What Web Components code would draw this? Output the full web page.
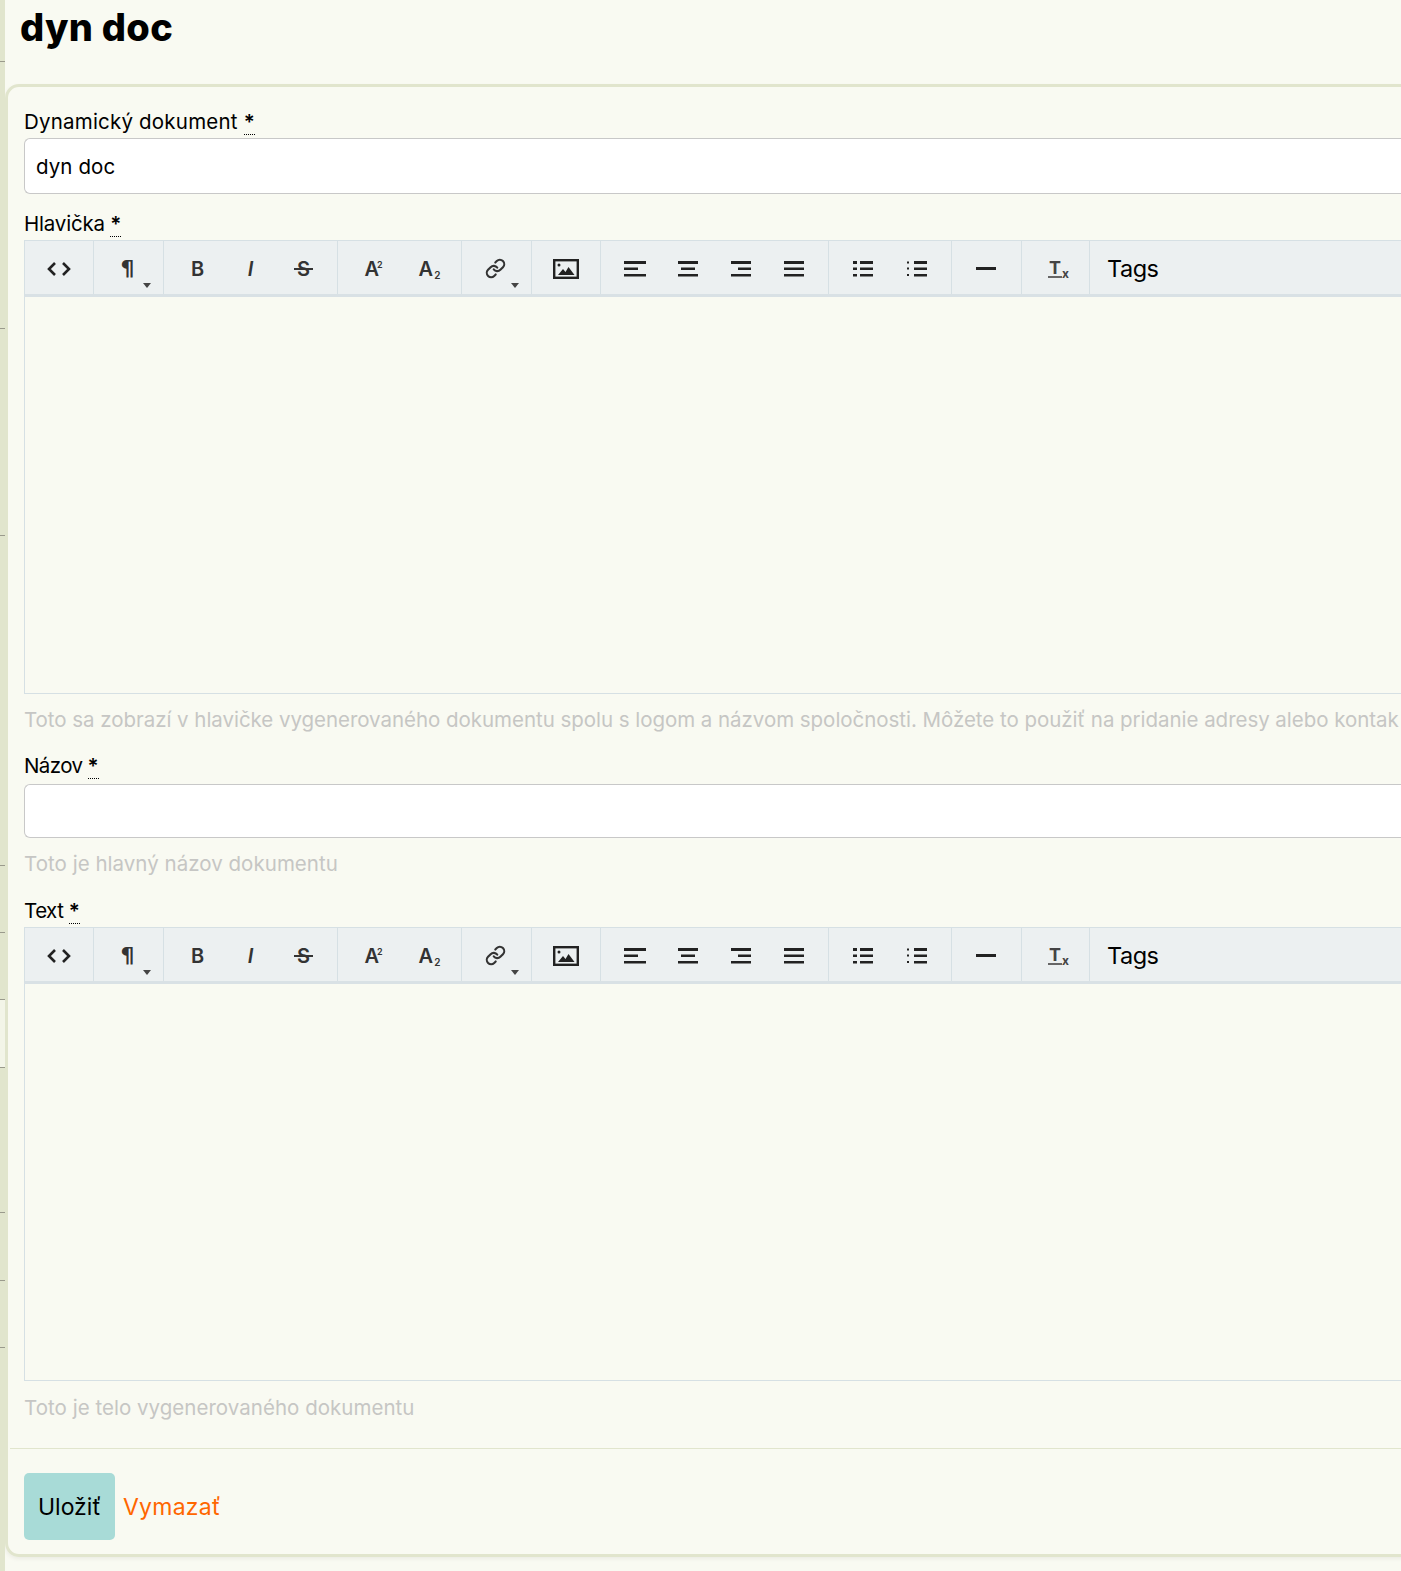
<!DOCTYPE html>
<html lang="sk">
<head>
<meta charset="utf-8">
<title>dyn doc</title>
<style>
    html, body { margin: 0; height: 100%; overflow: hidden; background: #f9faf2; }
    body { font-family: Inter, "Liberation Sans", sans-serif; color: #000; }
</style>
</head>
<body>
<template id="toolbar-tpl">
    <style>
        :host { display: flex; height: 57px; background: #ecf0f1; border-top: 1px solid #d6e0e4; border-bottom: 3px solid #d9e1e5; border-left: 1px solid #d6e0e4; box-sizing: border-box; color: #333; }
        .grp { display: flex; box-sizing: border-box; border-right: 1px solid #d6e0e4; padding-left: 7px; flex: none; }
        .btn { width: 53px; display: flex; align-items: center; justify-content: center; position: relative; font: 600 20px Inter, sans-serif; color: #333; padding-top: 2px; box-sizing: border-box; }
        .btn svg { display: block; }
        .caret::after { content: ""; position: absolute; right: 3px; bottom: 6px; border: 4px solid transparent; border-top: 5px solid #444; border-bottom: 0; }
        .pil { font: 700 22px "DejaVu Sans", sans-serif; }
        .strike { position: relative; padding: 0 1px; font-weight: 600; }
        .strike::after { content: ""; position: absolute; left: -2px; right: -2px; top: 11.5px; height: 1.5px; background: #333; }
        .sup { font-size: 9px; vertical-align: 8px; line-height: 0; margin-left: -2px; }
        .sub { font-size: 10px; vertical-align: -3px; line-height: 0; margin-left: 1px; }
        .clear { font: 700 18px Inter, sans-serif; color: #444; position: relative; top: -1px; left: 3px; }
        .clear b { display: inline-block; font-weight: inherit; border-bottom: 2px solid #666; line-height: 17px; padding: 0 1px; }
        .clear span { font-size: 12px; font-weight: 700; vertical-align: -4px; line-height: 0; }
        .tags { font: 400 23.5px Inter, sans-serif; color: #000; padding: 2px 0 0 17px; display: flex; align-items: center; letter-spacing: -.5px; }
    </style>
    <div class="grp" style="width:69px;padding-left:7px"><div class="btn"><svg width="24" height="16" viewBox="0 0 24 16" fill="none" stroke="#222" stroke-width="2.6"><path d="M8 2 2 8l6 6M16 2l6 6-6 6"/></svg></div></div>
    <div class="grp" style="width:70px"><div class="btn caret"><span class="pil">¶</span></div></div>
    <div class="grp" style="width:174px"><div class="btn">B</div><div class="btn"><i>I</i></div><div class="btn"><span class="strike">S</span></div></div>
    <div class="grp" style="width:124px"><div class="btn"><span style="position:relative;left:2px">A<span class="sup">2</span></span></div><div class="btn"><span style="position:relative;left:5px">A<span class="sub">2</span></span></div></div>
    <div class="grp" style="width:70px"><div class="btn caret"><svg width="21" height="21" viewBox="0 0 24 24" fill="none" stroke="#333" stroke-width="2.400" stroke-linecap="round"><path d="M10 13a5 5 0 0 0 7.540.540l3-3a5 5 0 0 0-7.070-7.070l-1.720 1.710"/><path d="M14 11a5 5 0 0 0-7.540-.540l-3 3a5 5 0 0 0 7.070 7.070l1.710-1.710"/></svg></div></div>
    <div class="grp" style="width:69px"><div class="btn"><svg width="26" height="20" viewBox="0 0 26 20"><rect x="1.200" y="1.200" width="23.600" height="17.600" fill="none" stroke="#222" stroke-width="2.400"/><circle cx="6" cy="6" r="1.500" fill="#222"/><path d="M5 16l5-6 2.500 3 3-5 6 8z" fill="#222"/></svg></div></div>
    <div class="grp" style="width:228px">
        <div class="btn"><svg width="22" height="16" viewBox="0 0 22 16" fill="#222"><path d="M0 0h22v3H0zM0 6.500h14v2.500H0zM0 13h22v2.500H0z"/></svg></div>
        <div class="btn"><svg width="22" height="16" viewBox="0 0 22 16" fill="#222"><path d="M1 0h20v3H1zM4 6.500h14v2.500H4zM1 13h20v2.500H1z"/></svg></div>
        <div class="btn"><svg width="22" height="16" viewBox="0 0 22 16" fill="#222"><path d="M1 0h20v3H1zM8 6.500h13v2.500H8zM1 13h20v2.500H1z"/></svg></div>
        <div class="btn"><svg width="22" height="16" viewBox="0 0 22 16" fill="#222"><path d="M1 0h20v3H1zM1 6.500h20v2.500H1zM1 13h20v2.500H1z"/></svg></div>
    </div>
    <div class="grp" style="width:123px">
        <div class="btn"><svg width="22" height="16" viewBox="0 0 22 16" fill="#222"><path d="M1 0h4v3H1zM8 0h13v3H8zM1 6.500h4v2.500H1zM8 6.500h13v2.500H8zM1 13h4v2.500H1zM8 13h13v2.500H8z"/></svg></div>
        <div class="btn" style="position:relative;left:1px"><svg width="22" height="16" viewBox="0 0 22 16" fill="#222"><path d="M1 .5h2v2H1zM8 0h13v3H8zM1 6.500h2v2H1zM8 6.500h13v2.500H8zM1 13h2v2H1zM8 13h13v2.500H8z"/></svg></div>
    </div>
    <div class="grp" style="width:70px"><div class="btn"><svg width="22" height="4" viewBox="0 0 22 4" fill="#222"><path d="M1 0h20v3H1z"/></svg></div></div>
    <div class="grp" style="width:68px"><div class="btn"><span class="clear"><b>T</b><span>x</span></span></div></div>
    <div class="tags">Tags</div>
</template>

<script>
    const asterisk = '<abbr style="text-decoration:none;border-bottom:1px dotted #000;font-weight:600">*</abbr>';

    class DocSidebar extends HTMLElement {
        connectedCallback() {
            const root = this.attachShadow({ mode: 'open' });
            // tick positions of the collapsed menu items
            const ticks = [61, 328, 535, 865, 932, 999, 1067, 1212, 1280, 1347];
            root.innerHTML = `
                <style>
                    :host { display: block; width: 5px; flex: none; background: #e1e5cd; position: relative; }
                    i { position: absolute; left: 0; width: 5px; height: 1px; background: #9a9a8c; }
                    b { position: absolute; left: 0; width: 5px; top: 1000px; height: 67px; background: #f3f5e8; }
                </style>
                <b></b>
                ${ticks.map(y => `<i style="top:${y}px"></i>`).join('')}`;
        }
    }

    class DocField extends HTMLElement {
        connectedCallback() {
            const root = this.attachShadow({ mode: 'open' });
            const labelH = this.getAttribute('label-h') || 31;
            const hintGap = this.getAttribute('hint-gap') || 12;
            const labelSp = this.getAttribute('label-sp') || '.2px';
            const hintSp = this.getAttribute('hint-sp') || '.03px';
            root.innerHTML = `
                <style>
                    :host { display: block; }
                    label { display: block; height: ${labelH}px; font-size: 20.5px; line-height: 30px; letter-spacing: ${labelSp}; }
                    abbr { letter-spacing: 0; }
                    .box { background: #fff; border: 1px solid #c8c8c8; border-right: 0; border-radius: 6px 0 0 6px; height: ${this.getAttribute('h') || 56}px; box-sizing: border-box; display: flex; align-items: center; padding-left: 11px; font-size: 20.5px; letter-spacing: .1px; }
                    .hint { font-size: 20.5px; color: #c6c6c4; white-space: nowrap; letter-spacing: ${hintSp}; line-height: 28px; margin-top: ${hintGap}px; }
                </style>
                <label>${this.getAttribute('label')} ${asterisk}</label>
                <slot name="editor"><div class="box"><slot></slot></div></slot>
                ${this.hasAttribute('hint') ? `<div class="hint">${this.getAttribute('hint')}</div>` : ''}`;
        }
    }

    class DocToolbar extends HTMLElement {
        connectedCallback() {
            this.attachShadow({ mode: 'open' }).appendChild(document.getElementById('toolbar-tpl').content.cloneNode(true));
        }
    }

    class DocEditor extends HTMLElement {
        connectedCallback() {
            this.attachShadow({ mode: 'open' }).innerHTML = `
                <style>
                    :host { display: block; }
                    .area { height: 397px; border-left: 1px solid #d6e0e4; border-bottom: 1px solid #d6e0e4; box-sizing: border-box; }
                </style>
                <doc-toolbar></doc-toolbar>
                <div class="area"></div>`;
        }
    }

    class DocActions extends HTMLElement {
        connectedCallback() {
            this.attachShadow({ mode: 'open' }).innerHTML = `
                <style>
                    :host { display: flex; align-items: center; gap: 8px; border-top: 1px solid #e1e5cd; margin: 0 0 0 2px; padding: 24px 0 15px 14px; font-size: 23px; }
                    .save { width: 91px; height: 67px; background: #a8dbd7; border-radius: 5px; display: flex; align-items: center; justify-content: center; color: #000; }
                    .clear { color: #f60; letter-spacing: .25px; }
                </style>
                <div class="save">Uložiť</div>
                <div class="clear">Vymazať</div>`;
        }
    }

    class DocPage extends HTMLElement {
        connectedCallback() {
            this.attachShadow({ mode: 'open' }).innerHTML = `
                <style>
                    :host { display: flex; height: 100vh; }
                    main { flex: 1; min-width: 0; overflow: hidden; }
                    h1 { margin: 0; height: 84px; box-sizing: border-box; padding: 4px 0 0 15px; font: 800 38px/46px Inter, sans-serif; letter-spacing: .3px; }
                    .card { border: 3px solid #e1e5cd; border-radius: 14px; height: 1473px; box-sizing: border-box; padding: 20px 0 0 0; margin-right: -20px; box-shadow: 0 2px 4px rgba(0,0,0,.06); }
                    .fields { padding-left: 16px; display: flex; flex-direction: column; }
                </style>
                <doc-sidebar></doc-sidebar>
                <main>
                    <h1>dyn doc</h1>
                    <div class="card">
                        <div class="fields"><slot></slot></div>
                        <doc-actions></doc-actions>
                    </div>
                </main>`;
        }
    }

    customElements.define('doc-sidebar', DocSidebar);
    customElements.define('doc-field', DocField);
    customElements.define('doc-toolbar', DocToolbar);
    customElements.define('doc-editor', DocEditor);
    customElements.define('doc-actions', DocActions);
    customElements.define('doc-page', DocPage);
</script>

<doc-page>
    <doc-field label="Dynamický dokument" style="margin-bottom:15px">dyn doc</doc-field>
    <doc-field label="Hlavička" label-sp="-.2px" hint-sp="-.04px" hint="Toto sa zobrazí v hlavičke vygenerovaného dokumentu spolu s logom a názvom spoločnosti. Môžete to použiť na pridanie adresy alebo kontak" style="margin-bottom:17px"><doc-editor slot="editor"></doc-editor></doc-field>
    <doc-field label="Názov" label-sp="-.6px" label-h="33" h="54" hint="Toto je hlavný názov dokumentu" style="margin-bottom:18px"></doc-field>
    <doc-field label="Text" label-sp="-.5px" hint-gap="13" hint="Toto je telo vygenerovaného dokumentu" style="margin-bottom:26px"><doc-editor slot="editor"></doc-editor></doc-field>
</doc-page>
</body>
</html>
